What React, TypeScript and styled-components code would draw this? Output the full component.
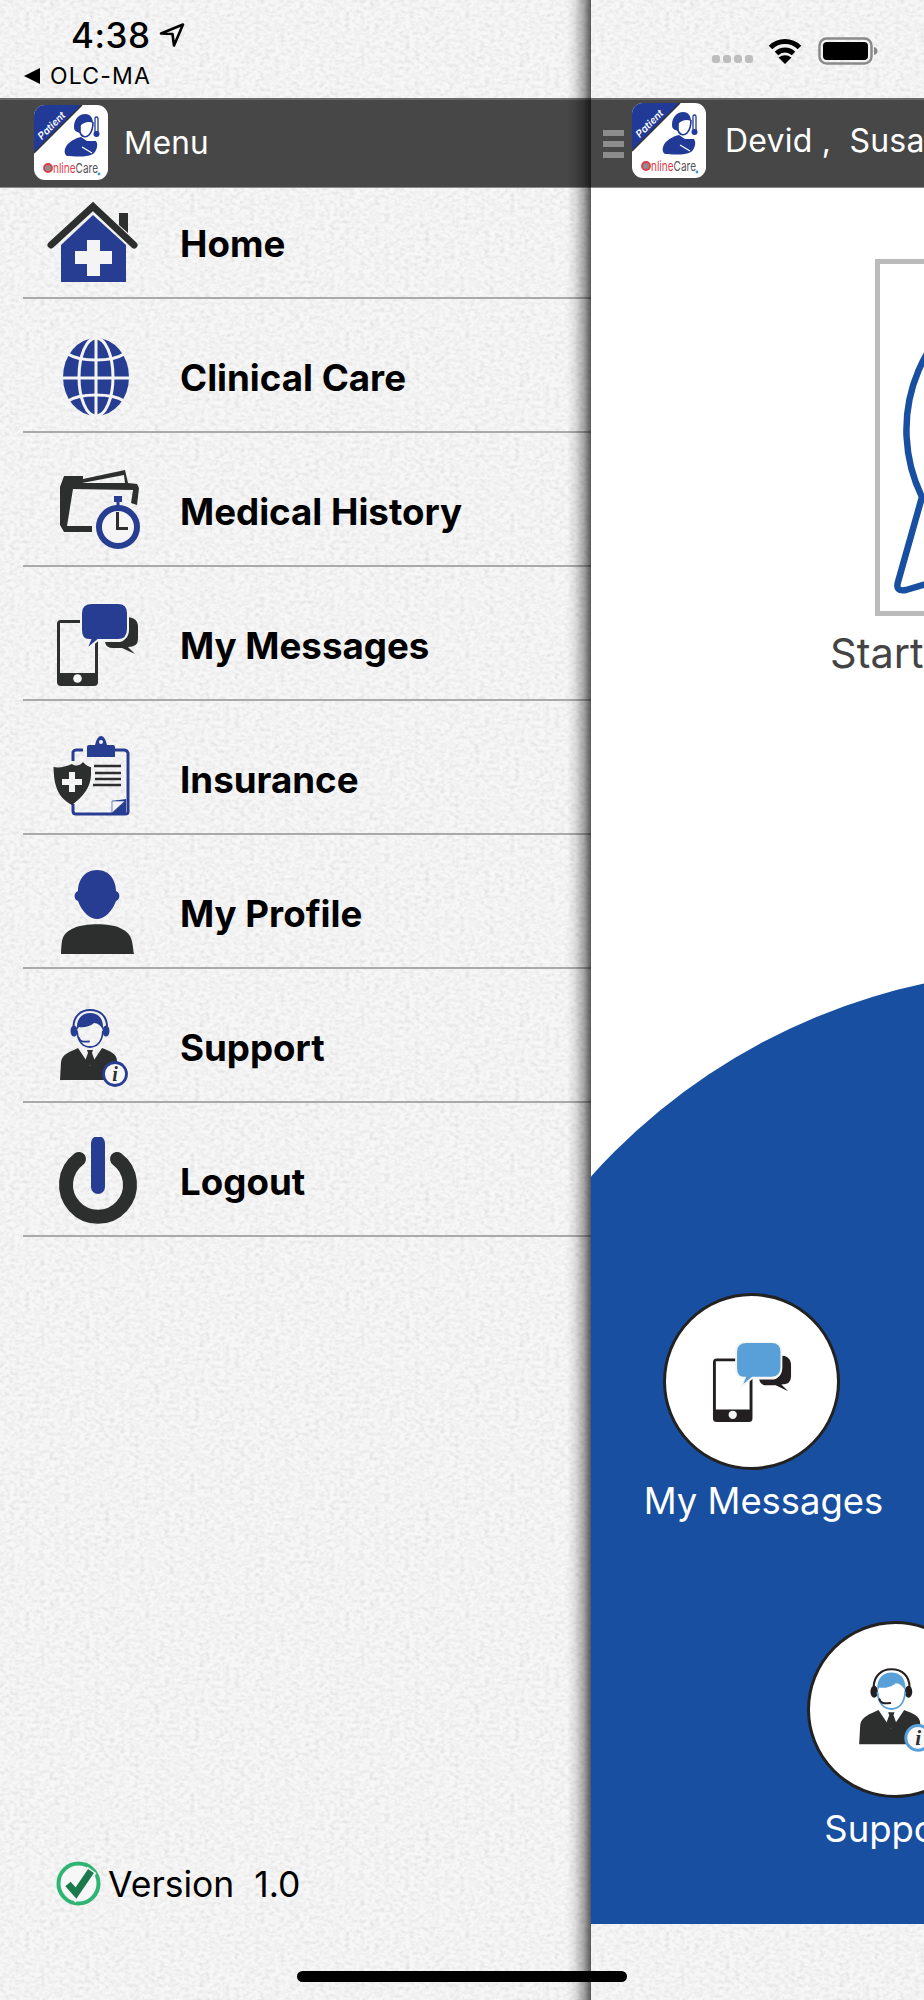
import React from 'react';
import styled, { createGlobalStyle } from 'styled-components';

const paper = `url("data:image/svg+xml,%3Csvg xmlns='http://www.w3.org/2000/svg' width='320' height='320'%3E%3Cfilter id='n' x='0' y='0' width='100%25' height='100%25'%3E%3CfeTurbulence type='fractalNoise' baseFrequency='.2 .28' numOctaves='3' seed='7' stitchTiles='stitch'/%3E%3CfeColorMatrix values='0 0 0 0 .6 0 0 0 0 .6 0 0 0 0 .6 .65 .65 0 0 -.54'/%3E%3C/filter%3E%3Crect width='320' height='320' filter='url(%23n)'/%3E%3C/svg%3E")`;

const Global = createGlobalStyle`
  html, body { margin: 0; padding: 0; background: #f7f7f7; }
  * { box-sizing: border-box; }
  body { font-family: Inter, "Liberation Sans", sans-serif; }
`;

const Screen = styled.div`
  position: relative;
  display: flex;
  width: 924px;
  height: 2000px;
  overflow: hidden;
  background-color: #f7f7f7;
  background-image: ${paper};
`;

const Drawer = styled.aside`
  width: 591px;
  height: 2000px;
  display: flex;
  flex-direction: column;
  flex: none;
`;

const StatusLeft = styled.div`
  height: 98px;
  display: flex;
  flex-direction: column;
`;

const TimeRow = styled.div`
  height: 56px;
  padding: 14px 0 0 71px;
  display: flex;
  align-items: center;
  gap: 8px;
`;

const Time = styled.span`
  font-size: 35px;
  font-weight: 500;
  line-height: 42px;
  color: #000;
  letter-spacing: 0.5px;
`;

const BackRow = styled.div`
  display: flex;
  align-items: center;
  height: 32px;
  padding: 8px 0 0 24px;
  gap: 10px;
`;

const BackLabel = styled.span`
  font-size: 23px;
  font-weight: 400;
  letter-spacing: 1.2px;
  color: #000;
`;

const BarBase = styled.header`
  height: 90px;
  background: #474747;
  border-top: 2px solid #6a6a6a;
  border-bottom: 1px solid #8a8a8a;
  display: flex;
  align-items: center;
  flex: none;
`;

const MenuBar = styled(BarBase)`
  padding: 0 0 0 34px;
  gap: 16px;
`;

const LogoWrap = styled.div<{ $lift: number }>`
  flex: none;
  display: flex;
  margin-top: ${p => -p.$lift}px;
`;

const BarTitle = styled.span`
  margin-top: -3px;
  font-size: 31.5px;
  font-weight: 400;
  color: #fff;
  white-space: pre;
  letter-spacing: 0.2px;
`;

const MenuList = styled.nav`
  display: flex;
  flex-direction: column;
`;

const Row = styled.div<{ $first?: boolean }>`
  margin-left: 23px;
  height: ${p => (p.$first ? 111 : 134)}px;
  padding: 0 0 8px 7px;
  display: flex;
  align-items: flex-end;
  border-bottom: 2px solid #aaa;
`;

const IconSlot = styled.svg`
  width: 130px;
  height: 90px;
  flex: none;
  display: block;
`;

const RowLabel = styled.span`
  margin-left: 20px;
  height: 90px;
  line-height: 90px;
  font-size: 36.7px;
  font-weight: 700;
  color: #000;
`;

const VersionRow = styled.div`
  margin-top: auto;
  padding: 0 0 94px 56px;
  display: flex;
  align-items: center;
  gap: 7px;
`;

const VersionText = styled.span`
  margin-top: 2px;
  font-size: 35.5px;
  font-weight: 400;
  color: #000;
  white-space: pre;
`;

const Main = styled.main`
  position: relative;
  z-index: 1;
  width: 333px;
  height: 2000px;
  flex: none;
  display: flex;
  flex-direction: column;
  overflow: hidden;
`;

const Shade = styled.div`
  position: absolute;
  left: 567px;
  top: 0;
  width: 24px;
  height: 2000px;
  z-index: 2;
  background: linear-gradient(to right, rgba(0, 0, 0, 0), rgba(0, 0, 0, 0.1) 35%, rgba(0, 0, 0, 0.32) 70%, rgba(0, 0, 0, 0.64));
`;

const StatusRight = styled.div`
  height: 98px;
  padding: 37px 0 0 121px;
  display: flex;
  align-items: flex-start;
`;

const SignalDots = styled.div`
  display: flex;
  gap: 3.5px;
  margin: 18px 14px 0 0;
`;

const SignalDot = styled.i`
  width: 7.5px;
  height: 8px;
  border-radius: 3px;
  background: #bdbdbd;
`;

const BatteryIcon = styled.svg`
  width: 62px;
  height: 28px;
  margin-left: 15px;
`;

const WifiIcon = styled.svg`
  width: 36px;
  height: 27px;
`;

const NameBar = styled(BarBase)`
  padding: 0 0 0 12px;
  overflow: visible;
`;

const Burger = styled.div`
  width: 21px;
  flex: none;
  display: flex;
  flex-direction: column;
  gap: 5px;
  margin-right: 8px;
`;

const BurgerLine = styled.i`
  height: 6px;
  background: #8c8c8c;
`;

const BarName = styled(BarTitle)`
  margin-left: 19px;
  margin-top: -6px;
  font-size: 32px;
  flex: none;
`;

const Content = styled.div`
  height: 1736px;
  background: #fff;
  display: flex;
  flex-direction: column;
  flex: none;
`;

const Hero = styled.div`
  height: 782px;
  flex: none;
  padding-top: 71px;
  display: flex;
  flex-direction: column;
`;

const StartCard = styled.div`
  width: 357px;
  height: 357px;
  flex: none;
  margin-left: 284px;
  border: 5px solid #bbb;
`;

const StartLabel = styled.div`
  margin: 13px 0 0 239px;
  font-size: 41.5px;
  line-height: 48px;
  color: #444;
  white-space: nowrap;
`;

const Curve = styled.section`
  width: 924px;
  height: 954px;
  flex: none;
  background: #184fa1;
  clip-path: circle(620px at 462px 620px);
  display: flex;
  flex-direction: column;
`;

const Tile = styled.div<{ $left: number; $top: number }>`
  width: 239px;
  margin: ${p => p.$top}px 0 0 ${p => p.$left}px;
  display: flex;
  flex-direction: column;
  align-items: center;
`;

const TileCircle = styled.div`
  width: 177px;
  height: 177px;
  border-radius: 50%;
  background: #fff;
  border: 3px solid #222;
  display: flex;
  align-items: center;
  justify-content: center;
`;

const TileLabel = styled.div<{ $shift: number }>`
  margin: 9px 0 0 ${p => p.$shift}px;
  font-size: 36.4px;
  line-height: 44px;
  color: #fff;
  white-space: nowrap;
`;

const HomeBar = styled.div`
  position: absolute;
  left: 297px;
  top: 1971px;
  width: 330px;
  height: 11px;
  border-radius: 6px;
  background: #000;
  z-index: 5;
`;

const NAVY = '#273d92';
const INK = '#2d2f2e';

const AppLogo = () => (
  <svg width="74" height="75" viewBox="0 0 74 75" style={{ flex: 'none' }}>
    <rect width="74" height="75" rx="11" fill="#fff" />
    <path d="M11 0H48L0 48V11A11 11 0 0 1 11 0Z" fill="#213a97" />
    <path d="M48 0L0 48" stroke="#333" strokeWidth="1.4" />
    <text x="20" y="23" transform="rotate(-45 20 23)" fontSize="10" fontWeight="600" fontStyle="italic" fill="#fff" fontFamily="Inter, sans-serif" textAnchor="middle">Patient</text>
    <path d="M40 22C40 13 46 9 51 9C57 9 59 14 59 18C55 16 50 17 46 21L46 28C44 27 40 27 40 22Z" fill="#213a97" />
    <path d="M46 19V27C47 32 52 33 55 30C58 27 59 23 59 17" fill="none" stroke="#213a97" strokeWidth="1.6" />
    <path d="M31 44C33 37 42 33 47 32L53 36L62 36C65 40 62 47 59 49C52 53 38 51 33 51C31 50 30 47 31 44Z" fill="#213a97" />
    <path d="M48 42L58 48" stroke="#fff" strokeWidth="1.2" />
    <rect x="61" y="12" width="3" height="16" rx="1.5" fill="none" stroke="#213a97" strokeWidth="1.3" />
    <circle cx="62.5" cy="29" r="3" fill="#213a97" />
    <circle cx="14" cy="63" r="4" fill="#8d8d8d" stroke="#e03a4a" strokeWidth="1.8" />
    <text x="19" y="68" fontSize="13.5" fontFamily="Inter, sans-serif" textLength="45" lengthAdjust="spacingAndGlyphs">
      <tspan fill="#e03a4a">nline</tspan>
      <tspan fill="#555">Care</tspan>
    </text>
    <circle cx="65" cy="69" r="1.4" fill="#3c9be0" />
  </svg>
);

const HomeIcon = () => (
  <IconSlot viewBox="0 0 130 90">
    <path d="M31 46L63 16L96 46V83H31Z" fill={NAVY} />
    <path d="M21 46L63 7.5L104 46" fill="none" stroke={INK} strokeWidth="7" strokeLinecap="round" strokeLinejoin="miter" />
    <path d="M89 14H98V34L89 26Z" fill={INK} />
    <path d="M57 41H70V52H82V65H70V77H57V65H45V52H57Z" fill="#f4f4f4" />
  </IconSlot>
);

const GlobeIcon = () => (
  <IconSlot viewBox="0 0 130 90">
    <ellipse cx="66" cy="44" rx="33" ry="39" fill={NAVY} />
    <g fill="none" stroke="#f4f4f4" strokeWidth="3">
      <ellipse cx="66" cy="44" rx="17" ry="39" />
      <path d="M66 4V84M32 45H100" />
      <path d="M38 21C50 29 82 29 94 21M38 68C50 60 82 60 94 68" />
    </g>
  </IconSlot>
);

const HistoryIcon = () => (
  <IconSlot viewBox="0 0 130 90">
    <path fillRule="evenodd" d="M30 58V20L34 9H53V12L95 3L98 16L107 17L109 21L107 38L101 36L103 23L43 22L37 59H62V65H34ZM52 16L94 8L95 16Z" fill={INK} />
    <circle cx="88" cy="60" r="19" fill="#f5f5f5" stroke={NAVY} strokeWidth="6" />
    <path d="M84 29H92V35H89.5V39H86.5V35H84Z" fill={NAVY} />
    <path d="M87.5 45V61.5H98" fill="none" stroke={INK} strokeWidth="3" />
  </IconSlot>
);

const MessagesGlyph = ({ bubble, dark, size }: { bubble: string; dark: string; size?: number }) => (
  <svg viewBox={size ? '27 2 81 83' : '0 0 130 90'} width={size ?? 130} height={size ?? 90} style={{ display: 'block', flex: 'none' }}>
    <path d="M32 19H64A4 4 0 0 1 68 23V81A4 4 0 0 1 64 85H31A4 4 0 0 1 27 81V23A4 4 0 0 1 31 19ZM30 22V72H65V22Z" fill={dark} fillRule="evenodd" />
    <circle cx="47.5" cy="77.5" r="4.3" fill="#f5f5f5" />
    <path d="M81 16H96Q108 16 108 26V38Q108 46 98 46L105 53L92 47H83Q76 47 75 41H90Q97 40 96 30V23Q96 19 81 19Z" fill={dark} />
    <path d="M62 2H88Q98 2 98 12V28Q98 39 88 39H68L56 49L60 39H59Q51 39 51 29V12Q51 2 62 2Z" fill={bubble} stroke="#f5f5f5" strokeWidth="2" />
  </svg>
);

const InsuranceIcon = () => (
  <IconSlot viewBox="0 0 130 90">
    <path d="M53 15H46Q44 15 43 17V26M85 15H94Q97 15 98 18V77Q98 79 95 79H46Q43 79 43 76V69" fill="none" stroke={NAVY} strokeWidth="3" />
    <path d="M57 22V12Q57 10 59 10H65Q67 1 71 1Q75 1 77 10H83Q85 10 85 12V22Z" fill={NAVY} />
    <circle cx="71" cy="7" r="2" fill="#f5f5f5" />
    <path d="M43 27C47 30 52 28 54 25C56 28 61 30 62 30V36C62 46 59 56 43 68V68C28 60 25 48 24.5 30C30 31 36 30 43 27Z" transform="translate(-1 2)" fill={INK} />
    <path d="M39 37H45V44H52V50H45V57H39V50H32V44H39Z" fill="#f5f5f5" />
    <path d="M64 31H91M65 38H91M65 44H91M63 50H91" stroke={INK} strokeWidth="2.6" />
    <path d="M82 78L82 66L96 64V78Z" fill={NAVY} />
    <path d="M82 78V66H95Z" fill="#f5f5f5" stroke={NAVY} strokeWidth="0.6" />
  </IconSlot>
);

const ProfileIcon = () => (
  <IconSlot viewBox="0 0 130 90">
    <path d="M67 1C80 1 86 12 86 22C91 24 90 31 86 32C82 43 74 50 67 50C60 50 52 43 48 32C44 31 43 24 48 22C48 12 54 1 67 1Z" fill={NAVY} />
    <path d="M31 85C32 70 31 65 44 59C55 54 80 54 90 59C103 65 102 72 104 85Z" fill={INK} />
  </IconSlot>
);

const SupportGlyph = ({ hair, band, info, size }: { hair: string; band: string; info: string; size?: number }) => (
  <svg viewBox={size ? '28 4 72 82' : '0 0 130 90'} width={size ? size * 0.878 : 130} height={size ?? 90} style={{ display: 'block', flex: 'none' }}>
    <path d="M43.5 28V24C43.5 13 51 7 60 7C70 7 77 13 77 24V28" fill="none" stroke={band} strokeWidth="2" />
    <ellipse cx="44" cy="28" rx="3.5" ry="5.5" fill={band} />
    <ellipse cx="76" cy="28" rx="3.5" ry="5.5" fill={band} />
    <path d="M47 28C48 40 54 44 60 44C66 44 72 40 73 28" fill="none" stroke={hair} strokeWidth="1.8" />
    <path d="M47 26C46 15 53 10 60 10C68 10 74 15 73 27C71 23 68 20 64 20C60 24 52 25 49 24C48 25 48 26 47 26Z" fill={hair} />
    <path d="M49 35C50 39 53 39 59 38.5" fill="none" stroke={band} strokeWidth="1.8" strokeLinecap="round" />
    <path d="M30 77L31 59C32 51 40 49 48 45L60 63L72 45C79 48 87 50 87 58V77Z" fill={INK} />
    <path d="M57 47H63L62 50L65 58L60 63L55 58L58 50Z" fill={INK} />
    <circle cx="85" cy="71" r="11.5" fill="#f8f8f8" stroke={info} strokeWidth="2.8" />
    <text x="85" y="78" textAnchor="middle" fontSize="20" fontWeight="700" fontStyle="italic" fontFamily="Liberation Serif, serif" fill={INK}>i</text>
  </svg>
);

const LogoutIcon = () => (
  <IconSlot viewBox="0 0 130 90">
    <path d="M49 22A32 32 0 1 0 87 22" fill="none" stroke={INK} strokeWidth="14" strokeLinecap="round" />
    <path d="M68 6V50" fill="none" stroke={NAVY} strokeWidth="14" strokeLinecap="round" />
  </IconSlot>
);

const items: [string, React.ReactNode][] = [
  ['Home', <HomeIcon />],
  ['Clinical Care', <GlobeIcon />],
  ['Medical History', <HistoryIcon />],
  ['My Messages', <MessagesGlyph bubble={NAVY} dark={INK} />],
  ['Insurance', <InsuranceIcon />],
  ['My Profile', <ProfileIcon />],
  ['Support', <SupportGlyph hair={NAVY} band={NAVY} info={NAVY} />],
  ['Logout', <LogoutIcon />],
];

export default function App() {
  return (
    <Screen>
      <Global />
      <Drawer>
        <StatusLeft>
          <TimeRow>
            <Time>4:38</Time>
            <svg width="26" height="26" viewBox="0 0 26 26">
              <path d="M2 11.5L24 2.5L15 23.5L13.5 12Z" fill="none" stroke="#000" strokeWidth="2.6" strokeLinejoin="round" />
            </svg>
          </TimeRow>
          <BackRow>
            <svg width="16" height="16" viewBox="0 0 16 16">
              <path d="M0 8L16 0V16Z" fill="#000" />
            </svg>
            <BackLabel>OLC-MA</BackLabel>
          </BackRow>
        </StatusLeft>
        <MenuBar>
          <LogoWrap $lift={3}>
            <AppLogo />
          </LogoWrap>
          <BarTitle>Menu</BarTitle>
        </MenuBar>
        <MenuList>
          {items.map(([label, icon], i) => (
            <Row key={label} $first={i === 0}>
              {icon}
              <RowLabel>{label}</RowLabel>
            </Row>
          ))}
        </MenuList>
        <VersionRow>
          <svg width="45" height="45" viewBox="0 0 45 45">
            <circle cx="22.5" cy="22.5" r="20" fill="#f7f7f7" stroke="#2fb573" strokeWidth="4" />
            <path d="M10 23L19 33L36 9" fill="none" stroke="#f7f7f7" strokeWidth="11" />
            <path d="M12 23L20 32L35 10" fill="none" stroke="#1b7a4b" strokeWidth="7" />
          </svg>
          <VersionText>Version  1.0</VersionText>
        </VersionRow>
      </Drawer>
      <Main>
        <StatusRight>
          <SignalDots>
            <SignalDot />
            <SignalDot />
            <SignalDot />
            <SignalDot />
          </SignalDots>
          <WifiIcon viewBox="0 0 36 27">
            <path d="M3.5 10.5A20.5 20.5 0 0 1 32.5 10.5" fill="none" stroke="#000" strokeWidth="5" />
            <path d="M9.5 16.5A12.2 12.2 0 0 1 26.5 16.5" fill="none" stroke="#000" strokeWidth="5" />
            <path d="M18 27L11.5 20.5Q18 16 24.5 20.5Z" fill="#000" />
          </WifiIcon>
          <BatteryIcon viewBox="0 0 62 28">
            <rect x="1.5" y="1.5" width="52" height="25" rx="7" fill="none" stroke="#8a8a8a" strokeWidth="2.5" />
            <rect x="5" y="5" width="45" height="18" rx="4" fill="#000" />
            <path d="M56 10C58.5 10.5 59.5 12 59.5 14C59.5 16 58.5 17.5 56 18Z" fill="#8a8a8a" />
          </BatteryIcon>
        </StatusRight>
        <NameBar>
          <Burger>
            <BurgerLine />
            <BurgerLine />
            <BurgerLine />
          </Burger>
          <LogoWrap $lift={6}>
            <AppLogo />
          </LogoWrap>
          <BarName>Devid ,  Susan</BarName>
        </NameBar>
        <Content>
          <Hero>
            <StartCard>
              <svg width="347" height="347" viewBox="0 0 347 347" style={{ display: 'block' }}>
                <path d="M100 304L26 326Q15 328 18 318L42 233A152 152 0 1 1 180 318" fill="none" stroke="#184fa1" strokeWidth="6.5" strokeLinejoin="round" />
              </svg>
            </StartCard>
            <StartLabel>Start</StartLabel>
          </Hero>
          <Curve>
            <Tile $left={41} $top={323}>
              <TileCircle>
                <MessagesGlyph bubble="#5aa0d8" dark="#231f20" size={80} />
              </TileCircle>
              <TileLabel $shift={24}>My Messages</TileLabel>
            </Tile>
            <Tile $left={185} $top={98}>
              <TileCircle>
                <SupportGlyph hair="#5aa0d8" band="#231f20" info="#5aa0d8" size={88} />
              </TileCircle>
              <TileLabel $shift={-5}>Support</TileLabel>
            </Tile>
          </Curve>
        </Content>
      </Main>
      <Shade />
      <HomeBar />
    </Screen>
  );
}
